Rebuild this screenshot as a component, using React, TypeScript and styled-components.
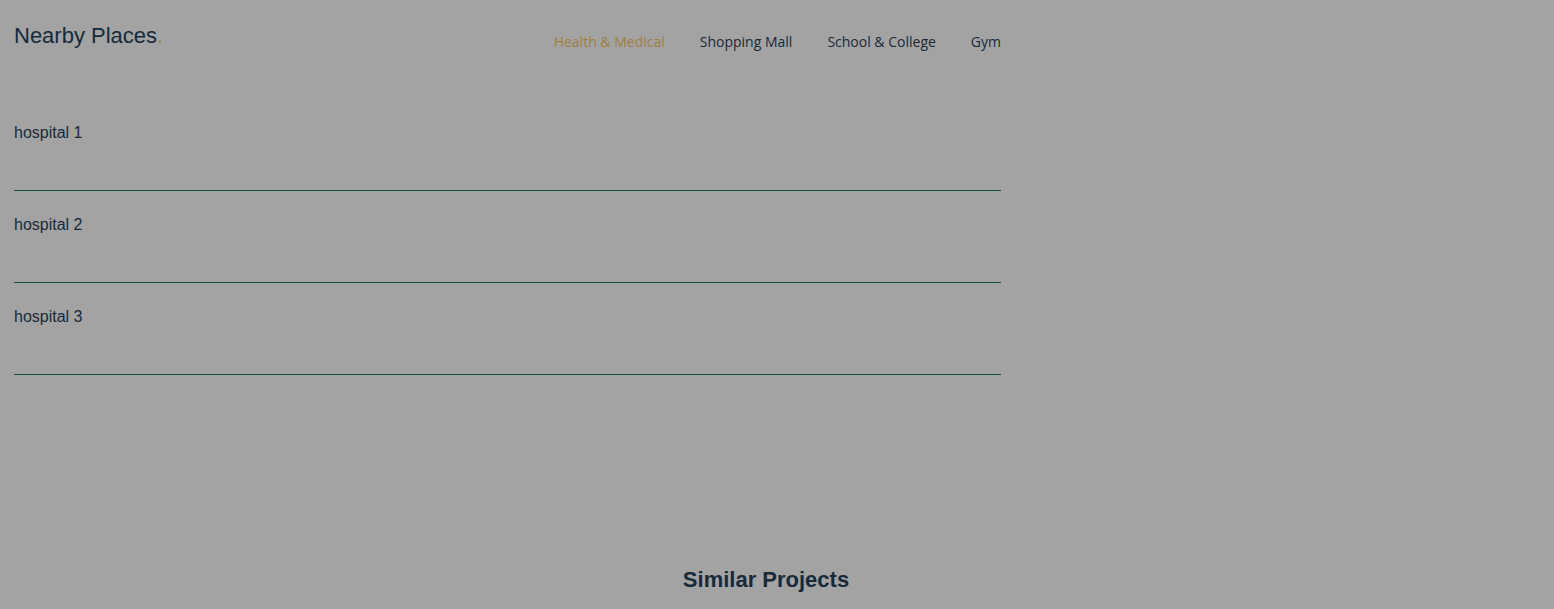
import React from "react";
import styled, { createGlobalStyle } from "styled-components";

const Global = createGlobalStyle`
  html, body { margin: 0; padding: 0; background: #a3a3a3; }
  body { font-family: "Liberation Sans", Arial, sans-serif; color: #172a39; overflow: hidden; }
`;

const Page = styled.div`
  width: 1554px;
  height: 609px;
  background: #a3a3a3;
  box-sizing: border-box;
  padding: 0 14px;
  display: flex;
  flex-direction: column;
`;

const Section = styled.section`
  width: 987px;
  display: flex;
  flex-direction: column;
`;

const Header = styled.header`
  display: flex;
  justify-content: space-between;
  align-items: flex-start;
  height: 99px;
  padding-top: 23px;
  box-sizing: border-box;
`;

const Logo = styled.h2`
  margin: 0;
  font-size: 22px;
  font-weight: 400;
  line-height: 26px;
  color: #172a39;
  font-family: "Liberation Sans", Arial, sans-serif;
`;

const Dot = styled.span`
  color: #a0803f;
`;

const Nav = styled.nav`
  display: flex;
  gap: 35px;
  padding-top: 10px;
`;

const NavItem = styled.a<{ $active?: boolean }>`
  font-family: "Open Sans", sans-serif;
  font-size: 14px;
  line-height: 18px;
  color: ${(p) => (p.$active ? "#a0803f" : "#172a39")};
  text-decoration: none;
  cursor: pointer;
`;

const Row = styled.div`
  height: 92px;
  box-sizing: border-box;
  padding-top: 25px;
  border-bottom: 1px solid #17503f;
`;

const RowText = styled.div`
  font-size: 16px;
  line-height: 18px;
  color: #172a39;
`;

const Similar = styled.h2`
  margin: 192px 0 0;
  width: 1504px;
  text-align: center;
  font-size: 22px;
  font-weight: 700;
  line-height: 26px;
  color: #172a39;
`;

export default function App() {
  return (
    <>
      <Global />
      <Page>
        <Section>
          <Header>
            <Logo>
              Nearby Places<Dot>.</Dot>
            </Logo>
            <Nav>
              <NavItem $active>Health &amp; Medical</NavItem>
              <NavItem>Shopping Mall</NavItem>
              <NavItem>School &amp; College</NavItem>
              <NavItem>Gym</NavItem>
            </Nav>
          </Header>
          {["hospital 1", "hospital 2", "hospital 3"].map((h) => (
            <Row key={h}>
              <RowText>{h}</RowText>
            </Row>
          ))}
        </Section>
        <Similar>Similar Projects</Similar>
      </Page>
    </>
  );
}
